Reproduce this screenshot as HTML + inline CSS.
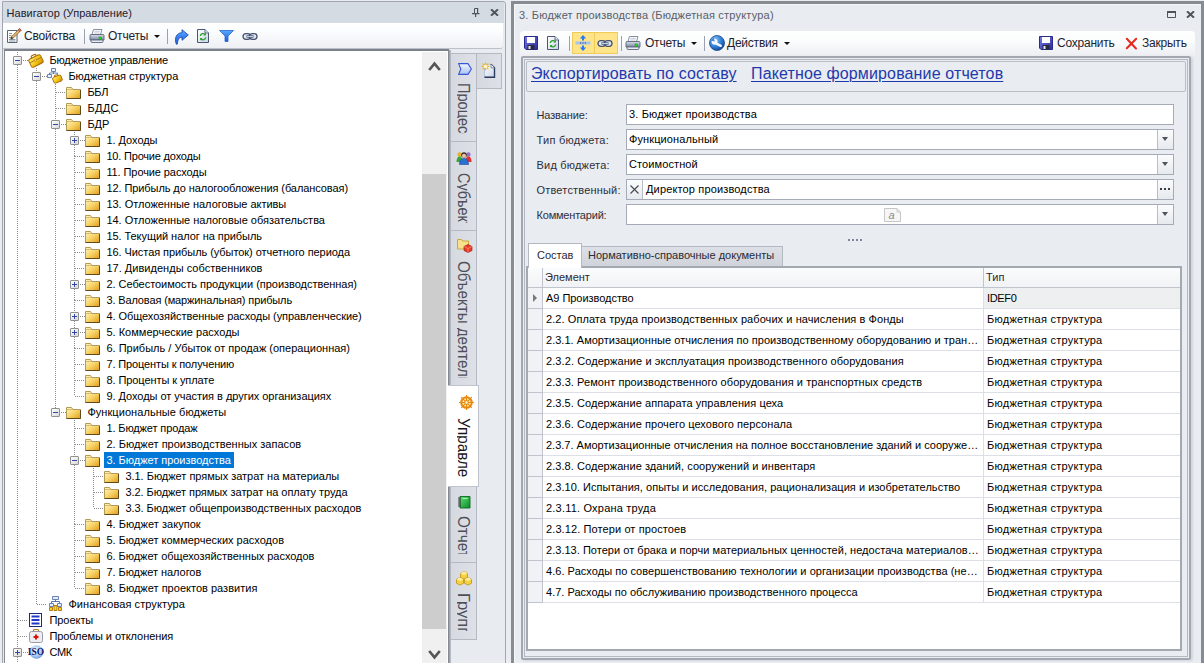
<!DOCTYPE html>
<html lang="ru"><head><meta charset="utf-8"><title>Навигатор</title>
<style>
*{box-sizing:border-box;margin:0;padding:0}
html,body{width:1204px;height:663px;overflow:hidden;background:#e9ecf0;font-family:"Liberation Sans",sans-serif;font-size:11px;color:#000}
.abs,.abs>*{position:absolute}
i,b,u,s{display:block;position:absolute;font-style:normal;text-decoration:none}
/* left panel */
#lp{left:2px;top:1px;width:504px;height:670px;border:1px solid #a2a7af;border-radius:0 3px 0 0;background:#e8ebef}
#lt{left:3px;top:2px;width:501px;height:21px;background:#d5dbe3}
#lt span{left:3.500px;top:5px;font-size:11px;line-height:13px;color:#1e2030;white-space:nowrap;letter-spacing:.05px}
#ltb{left:3px;top:23px;width:500px;height:26px;background:linear-gradient(#ffffff,#fbfcfd 35%,#eef0f4);border-bottom:1px solid #bcc1c9;border-radius:0 0 3px 0}
.tb{font-size:12px;line-height:14px;color:#1e1e2e;white-space:nowrap;letter-spacing:-.22px}
.sep{width:1px;background:#9aa0b0}
#tree{left:4px;top:49px;width:445px;height:620px;border:1px solid #858a92;border-top:2px solid #858a92;border-top-color:#7d828a;background:#fff}
#tr{left:0;top:0;width:1204px;height:663px}
.vl{width:1px;background-image:linear-gradient(#8c8c8c 50%,transparent 50%);background-size:1px 2px}
.hl{height:1px;background-image:linear-gradient(90deg,#8c8c8c 50%,transparent 50%);background-size:2px 1px}
.ex{width:9px;height:9px;border:1px solid #919191;background:linear-gradient(135deg,#fff,#d8d8d8);border-radius:1px}
.ex b{left:1px;top:3px;width:5px;height:1px;background:#3048a8}
.ex u{left:3px;top:1px;width:1px;height:5px;background:#3048a8}
.ic{position:absolute}
.tx{position:absolute;font-size:11px;line-height:16px;height:16px;white-space:nowrap;padding:0 2px 0 2.400px}
.tx.sel{background:#0078d7;color:#fff;padding-right:3px}
#sb{left:422px;top:52px;width:25px;height:611px;background:#f0f0f0}
#sbt{left:422px;top:174px;width:24px;height:455px;background:#cdcdcd}
/* vertical tabs */
#vtl{left:449px;top:50px;width:2px;height:613px;background:linear-gradient(90deg,#8f959d,#c3c8cf)}
.vt{border:1px solid #b5bac2;background:linear-gradient(90deg,#d6dae0,#dde1e7)}
.vt.act{background:#fff;border-color:#c0c5cd;border-left:0}
.vtx{left:472.400px;font-size:17px;color:#4e4e58;white-space:nowrap;transform-origin:0 0;transform:rotate(90deg);line-height:17px;height:15.400px;overflow:hidden}
.vtx span{display:block;position:absolute;left:0;top:0;transform-origin:0 0;transform:scaleX(.86)}
/* right panel */
#rp{left:511px;top:1px;width:693px;height:670px;border:3px solid #878b92;background:#e9ecf0;box-shadow:inset 1px 1px 0 #f6f7f9}
#rt{left:519px;top:9px;font-size:11px;line-height:13px;color:#5a5e6a;white-space:nowrap;letter-spacing:.2px}
#rtb{left:520px;top:31px;width:675px;height:25px;background:linear-gradient(#ffffff,#fbfcfd 40%,#eceef2);border-radius:4px 4px 0 0}
.hot{background:#ffe48a;border:1px solid #f2ca58}
#cont{left:521px;top:56px;width:670px;height:604px;border:2px solid #a3a8b0;border-radius:2px;box-shadow:2px 1px 2px #d2d6dc}
#cont2{left:524px;top:59px;width:664px;height:598px;border:1px solid #b4b9c1}
#links{left:526px;top:61px;width:660px;height:31px;border:1px solid #b9bec6;border-radius:2px;background:#e9ecf0}
.lnk{font-size:16px;line-height:20px;color:#1e3aac;text-decoration:underline;text-underline-offset:1.500px;text-decoration-thickness:1px;white-space:nowrap}
.lab{font-size:11px;line-height:13px;color:#2e2e3a;white-space:nowrap}
.inp{height:21px;border:1px solid #a4abb6;background:#fff;font-size:11px;line-height:19px;white-space:nowrap;letter-spacing:.1px}
.btn{width:16px;height:19px;border-left:1px solid #b9bec6;background:linear-gradient(#fbfcfd,#e6e9ee)}
.btn .dot{top:8px;width:2px;height:2px;background:#3a3e46}
.arr{width:0;height:0;border:4px solid transparent;border-top:4px solid #50545c;border-bottom:0;border-left-width:3.500px;border-right-width:3.500px}
.d4{top:239px;width:2px;height:2px;background:#7e8898}
.tab{font-size:11px;line-height:13px;white-space:nowrap;color:#2a2a34}
#tab1{left:528px;top:243px;width:54px;height:25px;background:#fff;border:1px solid #b4b9c1;border-bottom:0}
#tab2{left:581px;top:246px;width:202px;height:21px;background:linear-gradient(#dde0e6,#d0d4da);border:1px solid #b4b9c1}
#grid{left:526px;top:266px;width:656px;height:385px;border:2px solid #a3a9b1;background:#fff}
#gh{left:528px;top:268px;width:652px;height:20px;background:linear-gradient(#fbfcfd,#f0f2f5);border-bottom:1px solid #c0c4cc}
#gh i{top:0;width:1px;height:19px;background:#c0c4cc}
.gr{position:absolute;left:528px;width:652px;height:21px;border-bottom:1px solid #dcdfe5;font-size:11px;line-height:20px;white-space:nowrap}
.gr .ind{left:0;top:0;width:15px;height:21px;background:#f0f2f5;border-right:1px solid #c0c4cc;border-bottom:1px solid #c0c4cc}
.gr .ind s{left:5px;top:6px;width:0;height:0;border:4px solid transparent;border-left:4px solid #7a7a7a;border-right:0}
.gr .c1{letter-spacing:.08px;position:absolute;left:15px;top:0;width:441px;height:20px;padding-left:3px;overflow:hidden;border-right:1px solid #dcdfe5}
.gr .c2{letter-spacing:.25px;position:absolute;left:456px;top:0;width:196px;height:20px;padding-left:3px;overflow:hidden}
.gr.first .c2{background:#eeeff1}
</style></head><body>
<svg width="0" height="0" style="position:absolute">
<defs>
<linearGradient id="gf" x1="0" y1="0" x2="1" y2="1"><stop offset="0" stop-color="#fff6cc"/><stop offset=".5" stop-color="#f8d468"/><stop offset="1" stop-color="#e09c18"/></linearGradient>
<linearGradient id="gg" x1="0" y1="0" x2="1" y2="1"><stop offset="0" stop-color="#fff27a"/><stop offset=".55" stop-color="#f4c414"/><stop offset="1" stop-color="#c48408"/></linearGradient>
<linearGradient id="gblue" x1="0" y1="0" x2="0" y2="1"><stop offset="0" stop-color="#5aa8ff"/><stop offset="1" stop-color="#1c5ad8"/></linearGradient>
<linearGradient id="gtag" x1="0" y1="0" x2="0" y2="1"><stop offset="0" stop-color="#f4f8ff"/><stop offset="1" stop-color="#a8c0f4"/></linearGradient>
<linearGradient id="gpage" x1="0" y1="0" x2="1" y2="1"><stop offset="0" stop-color="#ffffff"/><stop offset="1" stop-color="#c8d4e8"/></linearGradient>
<linearGradient id="ggreen" x1="0" y1="0" x2="1" y2="1"><stop offset="0" stop-color="#58e070"/><stop offset="1" stop-color="#0a8a28"/></linearGradient>
<radialGradient id="gglobe" cx=".35" cy=".3" r=".8"><stop offset="0" stop-color="#8ac8ff"/><stop offset=".6" stop-color="#2a78d0"/><stop offset="1" stop-color="#123a80"/></radialGradient>
<radialGradient id="giso" cx=".45" cy=".4" r=".6"><stop offset="0" stop-color="#ffffff"/><stop offset=".6" stop-color="#b4d0f4"/><stop offset="1" stop-color="#6c9ce0"/></radialGradient>
<linearGradient id="gprn" x1="0" y1="0" x2="0" y2="1"><stop offset="0" stop-color="#d8deea"/><stop offset="1" stop-color="#7c88a4"/></linearGradient>
<linearGradient id="gsave" x1="0" y1="0" x2="1" y2="1"><stop offset="0" stop-color="#7a7af0"/><stop offset="1" stop-color="#2a2a98"/></linearGradient>
<symbol id="i-f" viewBox="0 0 16 16"><path d="M0.500 14.500v-11h5l1.500 2h7.500v9z" fill="url(#gf)" stroke="#b49a58" stroke-width="1"/><path d="M1 5.500h6" stroke="#d8bc6c" stroke-width="1"/><path d="M0.500 14.500h14v-8.500" fill="none" stroke="#5e4a1c" stroke-width="1"/></symbol>
<symbol id="i-brief" viewBox="0 0 16 16"><g transform="rotate(-26 8 9)"><rect x="5.500" y="2.500" width="5" height="3" rx="1" fill="none" stroke="#a86c04" stroke-width="1.200"/><rect x="1.500" y="4.500" width="13" height="9" rx="2" fill="url(#gg)" stroke="#a86c04"/><path d="M2 8h12" stroke="#a86c04" stroke-width=".8"/><rect x="7" y="7" width="2" height="2" fill="#ffe9a0" stroke="#a86c04" stroke-width=".5"/></g></symbol>
<symbol id="i-bstruct" viewBox="0 0 16 16"><path d="M4.500 0.500h4v3h-4zM0.500 6.500h4v3h-4zM6.500 4v2M2.500 6v-1h8v1" fill="#eef4ff" stroke="#5a76a8" stroke-width=".9"/><g transform="translate(5,5) scale(.68) rotate(-20 8 9)"><rect x="5.500" y="2.500" width="5" height="3" rx="1" fill="none" stroke="#a86c04" stroke-width="1.400"/><rect x="1.500" y="4.500" width="13" height="9" rx="2" fill="url(#gg)" stroke="#a86c04" stroke-width="1.300"/></g></symbol>
<symbol id="i-fin" viewBox="0 0 16 16"><path d="M8.500 3.500v2.500M4.500 7v-1.500h8v1.500" fill="none" stroke="#5a76a8" stroke-width="1"/><path d="M5.500 0.500h6v3h-6zM2.500 7.500h4v3h-4zM10.500 7.500h4v3h-4z" fill="#e4eefc" stroke="#5a76a8" stroke-width=".9"/><path d="M2.500 11.500h3v3h-3zM7 9.500h3v5h-3zM11.500 11.500h3v3h-3z" fill="#f8d030" stroke="#a87408" stroke-width=".9"/></symbol>
<symbol id="i-proj" viewBox="0 0 16 16"><rect x="1.500" y="1.500" width="12" height="13" fill="#fff" stroke="#1a2a7a"/><path d="M3.500 4.500h8M3.500 8h8M3.500 11.500h8" stroke="#2038c8" stroke-width="2"/></symbol>
<symbol id="i-prob" viewBox="0 0 16 16"><rect x="5.500" y="1.500" width="5" height="3" rx="1" fill="none" stroke="#b08020" stroke-width="1.200"/><rect x="1.500" y="3.500" width="13" height="11" rx="2" fill="#eceef2" stroke="#9a9aa4"/><path d="M8 6.500v5M5.500 9h5" stroke="#e01010" stroke-width="2"/></symbol>
<symbol id="i-iso" viewBox="0 0 16 16"><circle cx="8.500" cy="8" r="6.800" fill="url(#giso)"/><text x="8" y="11.300" font-size="9.500" font-weight="bold" font-family="Liberation Serif,serif" text-anchor="middle" fill="#14146a">ISO</text></symbol>
<symbol id="i-print" viewBox="0 0 16 16"><path d="M4.500 1.500h8.500l-1.500 5h-8.500z" fill="#fff" stroke="#7a8296" stroke-width=".9"/><path d="M5.500 3.300h5.500M5 5h5.500" stroke="#b4bac8" stroke-width=".8"/><path d="M1 7.500q0-1 1-1h12q1 0 1 1v4.500h-14z" fill="url(#gprn)" stroke="#5c667e" stroke-width=".9"/><path d="M2 12h12v1.500q0 1-1 1h-10q-1 0-1-1z" fill="#e8ecf4" stroke="#5c667e" stroke-width=".9"/><rect x="10" y="9" width="2.500" height="2.500" fill="#28e028" stroke="#0a8a0a" stroke-width=".5"/></symbol>
<symbol id="i-refresh" viewBox="0 0 12 14"><path d="M0.500 0.500h7.500l3.500 3.500v9.500h-11z" fill="url(#gpage)" stroke="#4a5674" stroke-width="1"/><path d="M8 0.500v3.500h3.500" fill="#dfe6f2" stroke="#4a5674" stroke-width=".8"/><path d="M8.200 5.600A2.800 2.800 0 0 0 3.300 7M3.800 9.800A2.800 2.800 0 0 0 8.700 8.300" fill="none" stroke="#28a028" stroke-width="1.300"/><path d="M8.900 3.800v2.600H6.300zM3.100 11.600V9h2.600z" fill="#28a028"/></symbol>
<symbol id="i-chain" viewBox="0 0 16 9"><rect x="1" y="1.700" width="7.500" height="5.600" rx="2.800" fill="#dfe6f4" stroke="#46526e" stroke-width="1.300"/><rect x="7.500" y="1.700" width="7.500" height="5.600" rx="2.800" fill="#dfe6f4" stroke="#46526e" stroke-width="1.300"/><path d="M4.500 4.500h7" stroke="#46526e" stroke-width="2.400"/><path d="M5 4.500h6" stroke="#c4d0e8" stroke-width="1"/></symbol>
<symbol id="i-save" viewBox="0 0 14 14"><path d="M0.500 0.500h13v13h-11.500l-1.500-1.500z" fill="url(#gsave)" stroke="#2a2a8a" stroke-width="1"/><rect x="3" y="1" width="8" height="6" fill="#fff"/><rect x="3.500" y="9" width="7" height="4.500" fill="#2a2a3a"/><rect x="4.500" y="10" width="2" height="3" fill="#e8e8f0"/></symbol>
</defs></svg>

<div class="abs">
<!-- LEFT PANEL -->
<div id="lp"></div>
<div id="lt" class="abs"><span>Навигатор (Управление)</span></div>
<svg style="left:472px;top:8px" width="8" height="9" viewBox="0 0 8 9"><path d="M2.500 5V0.500h3V5" fill="none" stroke="#50545a"/><path d="M5 0v5h1.200V0zM0 5h7.500v1.200H0zM3 6h1.200v3H3z" fill="#50545a"/></svg>
<svg style="left:490px;top:9px" width="9" height="7" viewBox="0 0 9 7"><path d="M1 0.300L8 6.700M8 0.300L1 6.700" stroke="#50545a" stroke-width="2"/></svg>
<div id="ltb"></div>
<!-- props icon -->
<svg style="left:6px;top:28px" width="16" height="16" viewBox="0 0 16 16"><path d="M1.500 2.500h9.500v12h-9.500z" fill="#fff" stroke="#5a6478"/><path d="M3 5.500h3M3 7.500h2.500M3 9.500h2M3 11.500h6.500M3 13h6.500" stroke="#8a93a4" stroke-width="1"/><path d="M13.600 0.600l1.600 1.600-8 8-2.400 0.800 0.800-2.400z" fill="#e8b868" stroke="#6a5030" stroke-width=".7"/><path d="M13.600 0.600l1.600 1.600-1.400 1.400-1.600-1.600z" fill="#e87868" stroke="#8a3a30" stroke-width=".6"/><path d="M4.800 11l0.800-2.400 1.600 1.600z" fill="#2a2a2a"/></svg>
<span class="tb" style="left:24px;top:29px">Свойства</span>
<i class="sep" style="left:84px;top:29px;height:15px"></i>
<svg style="left:89px;top:28px" width="16" height="16"><use href="#i-print"/></svg>
<span class="tb" style="left:108px;top:29px">Отчеты</span>
<i class="arr" style="left:154px;top:35px;border-width:3.500px 3px 0 3px;border-top-color:#111"></i>
<i class="sep" style="left:167px;top:29px;height:15px"></i>
<svg style="left:174px;top:29px" width="15" height="16" viewBox="0 0 15 16"><path d="M8 0.700l6.300 5.300-6.300 5.300v-3.100c-2.800 0-4.300 2-4.600 6.800l-1 0.300c-2.600-6.500 0.600-11.600 5.600-11.600z" fill="url(#gblue)" stroke="#1c4fb4" stroke-width=".9" stroke-linejoin="round"/></svg>
<svg style="left:197px;top:29px" width="12" height="14"><use href="#i-refresh"/></svg>
<svg style="left:219px;top:30px" width="15" height="12" viewBox="0 0 15 12"><path d="M0.500 0.500h14l-5.500 5.500v5.500h-3v-5.500z" fill="url(#gblue)" stroke="#2468d0" stroke-width=".8" stroke-linejoin="round"/></svg>
<svg style="left:242px;top:32px" width="16" height="9"><use href="#i-chain"/></svg>

<div id="tree"></div>
<div id="sb"></div><div id="sbt"></div>
<svg style="left:428px;top:61px" width="13" height="10" viewBox="0 0 13 10"><path d="M1.200 9L6.500 2.600 11.800 9" fill="none" stroke="#555" stroke-width="2.600"/></svg>
<svg style="left:428px;top:650px" width="13" height="10" viewBox="0 0 13 10"><path d="M1.200 1L6.500 7.400 11.800 1" fill="none" stroke="#555" stroke-width="2.600"/></svg>
<div id="tr" class="abs">
<i class="hl" style="left:23px;top:60px;width:5px"></i>
<i class="ex" style="left:13px;top:56px"><b></b></i>
<svg class="ic" style="left:28px;top:52px" width="16" height="16"><use href="#i-brief"/></svg>
<span class="tx" style="left:47px;top:52px;letter-spacing:-0.136px">Бюджетное управление</span>
<i class="hl" style="left:42px;top:76px;width:5px"></i>
<i class="ex" style="left:32px;top:72px"><b></b></i>
<svg class="ic" style="left:47px;top:68px" width="16" height="16"><use href="#i-bstruct"/></svg>
<span class="tx" style="left:66px;top:68px;letter-spacing:-0.047px">Бюджетная структура</span>
<i class="hl" style="left:56px;top:92px;width:10px"></i>
<svg class="ic" style="left:66px;top:84px" width="16" height="16"><use href="#i-f"/></svg>
<span class="tx" style="left:85px;top:84px;letter-spacing:-0.269px">ББЛ</span>
<i class="hl" style="left:56px;top:108px;width:10px"></i>
<svg class="ic" style="left:66px;top:100px" width="16" height="16"><use href="#i-f"/></svg>
<span class="tx" style="left:85px;top:100px;letter-spacing:0.322px">БДДС</span>
<i class="hl" style="left:61px;top:124px;width:5px"></i>
<i class="ex" style="left:51px;top:120px"><b></b></i>
<svg class="ic" style="left:66px;top:116px" width="16" height="16"><use href="#i-f"/></svg>
<span class="tx" style="left:85px;top:116px;letter-spacing:-0.055px">БДР</span>
<i class="hl" style="left:80px;top:140px;width:5px"></i>
<i class="ex" style="left:70px;top:136px"><b></b><u></u></i>
<svg class="ic" style="left:85px;top:132px" width="16" height="16"><use href="#i-f"/></svg>
<span class="tx" style="left:104px;top:132px;letter-spacing:-0.031px">1. Доходы</span>
<i class="hl" style="left:75px;top:156px;width:10px"></i>
<svg class="ic" style="left:85px;top:148px" width="16" height="16"><use href="#i-f"/></svg>
<span class="tx" style="left:104px;top:148px;letter-spacing:-0.188px">10. Прочие доходы</span>
<i class="hl" style="left:75px;top:172px;width:10px"></i>
<svg class="ic" style="left:85px;top:164px" width="16" height="16"><use href="#i-f"/></svg>
<span class="tx" style="left:104px;top:164px;letter-spacing:-0.094px">11. Прочие расходы</span>
<i class="hl" style="left:75px;top:188px;width:10px"></i>
<svg class="ic" style="left:85px;top:180px" width="16" height="16"><use href="#i-f"/></svg>
<span class="tx" style="left:104px;top:180px;letter-spacing:-0.081px">12. Прибыль до налогообложения (балансовая)</span>
<i class="hl" style="left:75px;top:204px;width:10px"></i>
<svg class="ic" style="left:85px;top:196px" width="16" height="16"><use href="#i-f"/></svg>
<span class="tx" style="left:104px;top:196px;letter-spacing:-0.024px">13. Отложенные налоговые активы</span>
<i class="hl" style="left:75px;top:220px;width:10px"></i>
<svg class="ic" style="left:85px;top:212px" width="16" height="16"><use href="#i-f"/></svg>
<span class="tx" style="left:104px;top:212px;letter-spacing:-0.007px">14. Отложенные налоговые обязательства</span>
<i class="hl" style="left:75px;top:236px;width:10px"></i>
<svg class="ic" style="left:85px;top:228px" width="16" height="16"><use href="#i-f"/></svg>
<span class="tx" style="left:104px;top:228px;letter-spacing:-0.056px">15. Текущий налог на прибыль</span>
<i class="hl" style="left:75px;top:252px;width:10px"></i>
<svg class="ic" style="left:85px;top:244px" width="16" height="16"><use href="#i-f"/></svg>
<span class="tx" style="left:104px;top:244px;letter-spacing:-0.062px">16. Чистая прибыль (убыток) отчетного периода</span>
<i class="hl" style="left:75px;top:268px;width:10px"></i>
<svg class="ic" style="left:85px;top:260px" width="16" height="16"><use href="#i-f"/></svg>
<span class="tx" style="left:104px;top:260px;letter-spacing:0.025px">17. Дивиденды собственников</span>
<i class="hl" style="left:80px;top:284px;width:5px"></i>
<i class="ex" style="left:70px;top:280px"><b></b><u></u></i>
<svg class="ic" style="left:85px;top:276px" width="16" height="16"><use href="#i-f"/></svg>
<span class="tx" style="left:104px;top:276px;letter-spacing:-0.027px">2. Себестоимость продукции (производственная)</span>
<i class="hl" style="left:75px;top:300px;width:10px"></i>
<svg class="ic" style="left:85px;top:292px" width="16" height="16"><use href="#i-f"/></svg>
<span class="tx" style="left:104px;top:292px;letter-spacing:-0.132px">3. Валовая (маржинальная) прибыль</span>
<i class="hl" style="left:80px;top:316px;width:5px"></i>
<i class="ex" style="left:70px;top:312px"><b></b><u></u></i>
<svg class="ic" style="left:85px;top:308px" width="16" height="16"><use href="#i-f"/></svg>
<span class="tx" style="left:104px;top:308px;letter-spacing:-0.06px">4. Общехозяйственные расходы (управленческие)</span>
<i class="hl" style="left:80px;top:332px;width:5px"></i>
<i class="ex" style="left:70px;top:328px"><b></b><u></u></i>
<svg class="ic" style="left:85px;top:324px" width="16" height="16"><use href="#i-f"/></svg>
<span class="tx" style="left:104px;top:324px;letter-spacing:0.019px">5. Коммерческие расходы</span>
<i class="hl" style="left:75px;top:348px;width:10px"></i>
<svg class="ic" style="left:85px;top:340px" width="16" height="16"><use href="#i-f"/></svg>
<span class="tx" style="left:104px;top:340px;letter-spacing:0.009px">6. Прибыль / Убыток от продаж (операционная)</span>
<i class="hl" style="left:75px;top:364px;width:10px"></i>
<svg class="ic" style="left:85px;top:356px" width="16" height="16"><use href="#i-f"/></svg>
<span class="tx" style="left:104px;top:356px;letter-spacing:-0.123px">7. Проценты к получению</span>
<i class="hl" style="left:75px;top:380px;width:10px"></i>
<svg class="ic" style="left:85px;top:372px" width="16" height="16"><use href="#i-f"/></svg>
<span class="tx" style="left:104px;top:372px;letter-spacing:-0.078px">8. Проценты к уплате</span>
<i class="hl" style="left:75px;top:396px;width:10px"></i>
<svg class="ic" style="left:85px;top:388px" width="16" height="16"><use href="#i-f"/></svg>
<span class="tx" style="left:104px;top:388px;letter-spacing:-0.037px">9. Доходы от участия в других организациях</span>
<i class="hl" style="left:61px;top:412px;width:5px"></i>
<i class="ex" style="left:51px;top:408px"><b></b></i>
<svg class="ic" style="left:66px;top:404px" width="16" height="16"><use href="#i-f"/></svg>
<span class="tx" style="left:85px;top:404px;letter-spacing:0.057px">Функциональные бюджеты</span>
<i class="hl" style="left:75px;top:428px;width:10px"></i>
<svg class="ic" style="left:85px;top:420px" width="16" height="16"><use href="#i-f"/></svg>
<span class="tx" style="left:104px;top:420px;letter-spacing:-0.115px">1. Бюджет продаж</span>
<i class="hl" style="left:75px;top:444px;width:10px"></i>
<svg class="ic" style="left:85px;top:436px" width="16" height="16"><use href="#i-f"/></svg>
<span class="tx" style="left:104px;top:436px;letter-spacing:0.016px">2. Бюджет производственных запасов</span>
<i class="hl" style="left:80px;top:460px;width:5px"></i>
<i class="ex" style="left:70px;top:456px"><b></b></i>
<svg class="ic" style="left:85px;top:452px" width="16" height="16"><use href="#i-f"/></svg>
<span class="tx sel" style="left:104px;top:452px;letter-spacing:-0.023px">3. Бюджет производства</span>
<i class="hl" style="left:94px;top:476px;width:10px"></i>
<svg class="ic" style="left:104px;top:468px" width="16" height="16"><use href="#i-f"/></svg>
<span class="tx" style="left:123px;top:468px;letter-spacing:-0.021px">3.1. Бюджет прямых затрат на материалы</span>
<i class="hl" style="left:94px;top:492px;width:10px"></i>
<svg class="ic" style="left:104px;top:484px" width="16" height="16"><use href="#i-f"/></svg>
<span class="tx" style="left:123px;top:484px;letter-spacing:-0.053px">3.2. Бюджет прямых затрат на оплату труда</span>
<i class="hl" style="left:94px;top:508px;width:10px"></i>
<svg class="ic" style="left:104px;top:500px" width="16" height="16"><use href="#i-f"/></svg>
<span class="tx" style="left:123px;top:500px;letter-spacing:-0.039px">3.3. Бюджет общепроизводственных расходов</span>
<i class="hl" style="left:75px;top:524px;width:10px"></i>
<svg class="ic" style="left:85px;top:516px" width="16" height="16"><use href="#i-f"/></svg>
<span class="tx" style="left:104px;top:516px;letter-spacing:0.045px">4. Бюджет закупок</span>
<i class="hl" style="left:75px;top:540px;width:10px"></i>
<svg class="ic" style="left:85px;top:532px" width="16" height="16"><use href="#i-f"/></svg>
<span class="tx" style="left:104px;top:532px;letter-spacing:0.004px">5. Бюджет коммерческих расходов</span>
<i class="hl" style="left:75px;top:556px;width:10px"></i>
<svg class="ic" style="left:85px;top:548px" width="16" height="16"><use href="#i-f"/></svg>
<span class="tx" style="left:104px;top:548px;letter-spacing:-0.033px">6. Бюджет общехозяйственных расходов</span>
<i class="hl" style="left:75px;top:572px;width:10px"></i>
<svg class="ic" style="left:85px;top:564px" width="16" height="16"><use href="#i-f"/></svg>
<span class="tx" style="left:104px;top:564px;letter-spacing:-0.048px">7. Бюджет налогов</span>
<i class="hl" style="left:75px;top:588px;width:10px"></i>
<svg class="ic" style="left:85px;top:580px" width="16" height="16"><use href="#i-f"/></svg>
<span class="tx" style="left:104px;top:580px;letter-spacing:0.017px">8. Бюджет проектов развития</span>
<i class="hl" style="left:37px;top:604px;width:10px"></i>
<svg class="ic" style="left:47px;top:596px" width="16" height="16"><use href="#i-fin"/></svg>
<span class="tx" style="left:66px;top:596px;letter-spacing:0.075px">Финансовая структура</span>
<i class="hl" style="left:18px;top:620px;width:10px"></i>
<svg class="ic" style="left:28px;top:612px" width="16" height="16"><use href="#i-proj"/></svg>
<span class="tx" style="left:47px;top:612px;letter-spacing:-0.042px">Проекты</span>
<i class="hl" style="left:18px;top:636px;width:10px"></i>
<svg class="ic" style="left:28px;top:628px" width="16" height="16"><use href="#i-prob"/></svg>
<span class="tx" style="left:47px;top:628px;letter-spacing:-0.059px">Проблемы и отклонения</span>
<i class="hl" style="left:23px;top:652px;width:5px"></i>
<i class="ex" style="left:13px;top:648px"><b></b><u></u></i>
<svg class="ic" style="left:28px;top:644px" width="16" height="16"><use href="#i-iso"/></svg>
<span class="tx" style="left:47px;top:644px;letter-spacing:-0.269px">СМК</span>
<i class="vl" style="left:17px;top:65px;height:555px"></i>
<i class="vl" style="left:36px;top:81px;height:523px"></i>
<i class="vl" style="left:36px;top:68px;height:4px"></i>
<i class="vl" style="left:55px;top:92px;height:16px"></i>
<i class="vl" style="left:55px;top:84px;height:8px"></i>
<i class="vl" style="left:55px;top:108px;height:12px"></i>
<i class="vl" style="left:55px;top:129px;height:279px"></i>
<i class="vl" style="left:74px;top:145px;height:11px"></i>
<i class="vl" style="left:74px;top:132px;height:4px"></i>
<i class="vl" style="left:74px;top:156px;height:16px"></i>
<i class="vl" style="left:74px;top:172px;height:16px"></i>
<i class="vl" style="left:74px;top:188px;height:16px"></i>
<i class="vl" style="left:74px;top:204px;height:16px"></i>
<i class="vl" style="left:74px;top:220px;height:16px"></i>
<i class="vl" style="left:74px;top:236px;height:16px"></i>
<i class="vl" style="left:74px;top:252px;height:16px"></i>
<i class="vl" style="left:74px;top:268px;height:12px"></i>
<i class="vl" style="left:74px;top:289px;height:11px"></i>
<i class="vl" style="left:74px;top:300px;height:12px"></i>
<i class="vl" style="left:74px;top:321px;height:7px"></i>
<i class="vl" style="left:74px;top:337px;height:11px"></i>
<i class="vl" style="left:74px;top:348px;height:16px"></i>
<i class="vl" style="left:74px;top:364px;height:16px"></i>
<i class="vl" style="left:74px;top:380px;height:16px"></i>
<i class="vl" style="left:74px;top:428px;height:16px"></i>
<i class="vl" style="left:74px;top:420px;height:8px"></i>
<i class="vl" style="left:74px;top:444px;height:12px"></i>
<i class="vl" style="left:74px;top:465px;height:59px"></i>
<i class="vl" style="left:93px;top:476px;height:16px"></i>
<i class="vl" style="left:93px;top:468px;height:8px"></i>
<i class="vl" style="left:93px;top:492px;height:16px"></i>
<i class="vl" style="left:74px;top:524px;height:16px"></i>
<i class="vl" style="left:74px;top:540px;height:16px"></i>
<i class="vl" style="left:74px;top:556px;height:16px"></i>
<i class="vl" style="left:74px;top:572px;height:16px"></i>
<i class="vl" style="left:17px;top:620px;height:16px"></i>
<i class="vl" style="left:17px;top:636px;height:12px"></i>
<i class="vl" style="left:17px;top:50px;height:6px"></i>
<i class="vl" style="left:17px;top:657px;height:6px"></i>
</div>

<!-- vertical tabs -->
<i id="vtl"></i>
<div class="vt" style="left:450px;top:53px;width:27px;height:89px"></div>
<div class="vt" style="left:476px;top:53px;width:26px;height:36px"></div>
<div class="vt" style="left:450px;top:141px;width:27px;height:90px"></div>
<div class="vt" style="left:450px;top:230px;width:27px;height:156px"></div>
<div class="vt" style="left:450px;top:486px;width:27px;height:77px"></div>
<div class="vt" style="left:450px;top:562px;width:27px;height:78px"></div>
<div class="vt act" style="left:448px;top:385px;width:31px;height:102px"></div>
<div class="vtx" style="top:82.900px;width:51.200px"><span style="transform:scaleX(.859)">Процессы</span></div>
<div class="vtx" style="top:172.800px;width:50.200px"><span style="transform:scaleX(.846)">Субъекты</span></div>
<div class="vtx" style="top:260.700px;width:117.300px"><span style="transform:scaleX(.892)">Объекты деятельности</span></div>
<div class="vtx" style="top:417.500px;width:60.300px;color:#16161c"><span style="transform:scaleX(.896)">Управление</span></div>
<div class="vtx" style="top:516.300px;width:38px"><span style="transform:scaleX(.898)">Отчеты</span></div>
<div class="vtx" style="top:593.100px;width:38.100px"><span style="transform:scaleX(.970)">Группы</span></div>
<!-- tab icons -->
<svg style="left:458px;top:62.600px" width="14" height="12" viewBox="0 0 14 12"><path d="M0.600 0.600h9.400l3.400 5.400-3.400 5.400H0.600l2.200-5.400z" fill="url(#gtag)" stroke="#3558d4" stroke-width="1.100" stroke-linejoin="round"/></svg>
<svg style="left:481px;top:62px" width="15" height="17" viewBox="0 0 15 17"><path d="M3.500 2.300h6.500l3.500 3.500v9.400h-10z" fill="url(#gpage)" stroke="#a8b8d8" stroke-width=".8"/><path d="M10 2.300l3.500 3.500v9.400h-10" fill="none" stroke="#2c3c5e" stroke-width="1.400"/><path d="M10 2.300v3.500h3.500" fill="#eef2fa" stroke="#5a6888" stroke-width=".7"/><g stroke="#f0b818" stroke-width="1.300" stroke-linecap="round"><path d="M4.500 0.900v7M1 4.400h7M2 1.900l5 5M7 1.900l-5 5"/></g><circle cx="4.500" cy="4.400" r="1.700" fill="#fffbe0"/></svg>
<svg style="left:456px;top:150px" width="16" height="15" viewBox="0 0 16 15"><circle cx="3.600" cy="4.500" r="2.200" fill="#e8b030"/><path d="M0.500 12c0-4 1.500-5.500 3.200-5.500s2.500 1.500 2.800 5.500z" fill="#38a838"/><circle cx="12.400" cy="4.500" r="2.200" fill="#9a6ad0"/><path d="M15.500 12c0-4-1.500-5.500-3.200-5.500s-2.500 1.500-2.800 5.500z" fill="#e03030"/><circle cx="8" cy="5" r="2.800" fill="#3a3028"/><circle cx="8" cy="5.800" r="2" fill="#f0c8a0"/><path d="M3.500 14.500c0-4.500 2-6 4.500-6s4.500 1.500 4.500 6z" fill="#2a70d0" stroke="#1a4a9a" stroke-width=".6"/></svg>
<svg style="left:457px;top:238px" width="16" height="15" viewBox="0 0 16 15"><path d="M0.500 1.500h4l1 1.500h6v8h-11z" fill="#f8e08a" stroke="#c8a030" stroke-width=".9"/><path d="M7 8.500l4-2 4 2v4l-4 2-4-2z" fill="#e83a28" stroke="#a01c10" stroke-width=".7"/><path d="M7 8.500l4 2 4-2M11 10.500v4" stroke="#ff9a80" stroke-width=".7" fill="none"/></svg>
<svg style="left:459px;top:395px" width="15" height="15" viewBox="0 0 15 15"><circle cx="7.500" cy="7.500" r="5.300" fill="#ffe9a8" stroke="#e88a10" stroke-width="2"/><path d="M7.500 0v15M0 7.500h15M2.200 2.200l10.600 10.600M12.800 2.200L2.200 12.800" stroke="#e88a10" stroke-width="1.100"/><circle cx="7.500" cy="7.500" r="1.800" fill="#fff3c8" stroke="#d87a08" stroke-width=".8"/></svg>
<svg style="left:457px;top:495px" width="14" height="14" viewBox="0 0 14 14"><path d="M3 1.500h10v11.500h-10z" fill="url(#ggreen)" stroke="#0a6a20" stroke-width=".9"/><path d="M1 3h3M1 5h3M1 7h3M1 9h3M1 11h3" stroke="#3a3a3a" stroke-width="1"/><path d="M5.500 3.500h5" stroke="#a8f0b0" stroke-width="1.200"/></svg>
<svg style="left:456px;top:571px" width="16" height="15" viewBox="0 0 16 15"><path d="M8 0.500l3.500 1.800v4l-3.500 1.800-3.500-1.800v-4z" fill="#f8d040" stroke="#b88a08" stroke-width=".7"/><path d="M4 6.500l3.500 1.800v4l-3.500 1.800-3.500-1.800v-4z" fill="#f8d040" stroke="#b88a08" stroke-width=".7"/><path d="M12 6.500l3.500 1.800v4l-3.500 1.800-3.500-1.800v-4z" fill="#f8d040" stroke="#b88a08" stroke-width=".7"/><path d="M8 0.500l3.500 1.800-3.500 1.800-3.500-1.800zM4 6.500l3.500 1.800-3.500 1.800-3.500-1.800zM12 6.500l3.500 1.800-3.500 1.800-3.500-1.800z" fill="#fff0a0"/></svg>

<!-- RIGHT PANEL -->
<div id="rp"></div>
<span id="rt">3. Бюджет производства (Бюджетная структура)</span>
<svg style="left:1167px;top:11px" width="9" height="7" viewBox="0 0 9 7"><path d="M0.500 1h8v5.500h-8z" fill="none" stroke="#50545a" stroke-width="1"/><path d="M0 0h9v2H0z" fill="#50545a"/></svg>
<svg style="left:1186px;top:11px" width="9" height="7" viewBox="0 0 9 7"><path d="M1 0.300L8 6.700M8 0.300L1 6.700" stroke="#50545a" stroke-width="2"/></svg>
<div id="rtb"></div>
<svg style="left:524px;top:36px" width="14" height="14"><use href="#i-save"/></svg>
<svg style="left:547px;top:36px" width="12" height="14"><use href="#i-refresh"/></svg>
<i class="sep" style="left:569px;top:36px;height:15px"></i>
<i class="hot" style="left:572px;top:32px;width:23px;height:22px"></i>
<i class="hot" style="left:594px;top:32px;width:24px;height:22px"></i>
<svg style="left:575px;top:35px" width="16" height="16" viewBox="0 0 16 16"><path d="M0.500 6.500h15v3h-15z" fill="#a8c4ee"/><path d="M5 8h1.200M7.400 8h1.200M9.800 8h1.200" stroke="#1a3a8a" stroke-width="1"/><path d="M8 0l3.200 3.400H9v2.100H7V3.400H4.800zM8 16l3.200-3.400H9v-2.100H7v2.100H4.800z" fill="#2a7af0"/></svg>
<svg style="left:597px;top:39px" width="16" height="9"><use href="#i-chain"/></svg>
<i class="sep" style="left:621px;top:36px;height:15px"></i>
<svg style="left:625px;top:35px" width="16" height="16"><use href="#i-print"/></svg>
<span class="tb" style="left:645px;top:36px">Отчеты</span>
<i class="arr" style="left:691px;top:42px;border-width:3.500px 3px 0 3px;border-top-color:#111"></i>
<i class="sep" style="left:704px;top:36px;height:15px"></i>
<svg style="left:709px;top:35px" width="16" height="16" viewBox="0 0 16 16"><circle cx="8" cy="8" r="7.500" fill="url(#gglobe)" stroke="#1a4a8a" stroke-width=".8"/><path d="M6.500 8.200l5.300 2.600" stroke="#f4f8ff" stroke-width="2.400" stroke-linecap="round"/><circle cx="5.600" cy="6.700" r="2.900" fill="#f4f8ff"/><path d="M5.800 6.600L2 5.600 4.600 2.400z" fill="#3a86dc"/></svg>
<span class="tb" style="left:727px;top:36px">Действия</span>
<i class="arr" style="left:784px;top:42px;border-width:3.500px 3px 0 3px;border-top-color:#111"></i>
<svg style="left:1039px;top:36px" width="14" height="14"><use href="#i-save"/></svg>
<span class="tb" style="left:1057px;top:36px">Сохранить</span>
<svg style="left:1125px;top:37px" width="13" height="13" viewBox="0 0 13 13"><path d="M1.800 1.800L11 11.500M11.200 1.800L1.800 11.200" stroke="#e8281c" stroke-width="2" stroke-linecap="round"/></svg>
<span class="tb" style="left:1142px;top:36px">Закрыть</span>
<div id="cont"></div><div id="cont2"></div>
<div id="links"></div>
<span class="lnk" style="left:531px;top:64px;letter-spacing:.1px">Экспортировать по составу</span>
<span class="lnk" style="left:751px;top:64px;letter-spacing:.13px">Пакетное формирование отчетов</span>

<span class="lab" style="left:536.500px;top:109px;letter-spacing:-0.12px">Название:</span>
<span class="lab" style="left:536.500px;top:134px;letter-spacing:0.27px">Тип бюджета:</span>
<span class="lab" style="left:536.500px;top:159px;letter-spacing:0.2px">Вид бюджета:</span>
<span class="lab" style="left:536.500px;top:184px;letter-spacing:0.18px">Ответственный:</span>
<span class="lab" style="left:536.500px;top:209px;letter-spacing:-0.2px">Комментарий:</span>
<div class="inp" style="left:626px;top:104px;width:548px;padding-left:2px;letter-spacing:.14px">3. Бюджет производства</div>
<div class="inp" style="left:626px;top:129px;width:548px;padding-left:2px">Функциональный<i class="btn" style="right:0;top:0"><i class="arr" style="left:4px;top:7px"></i></i></div>
<div class="inp" style="left:626px;top:154px;width:548px;padding-left:2px">Стоимостной<i class="btn" style="right:0;top:0"><i class="arr" style="left:4px;top:7px"></i></i></div>
<div class="inp" style="left:626px;top:179px;width:548px;padding-left:19px;letter-spacing:.15px">Директор производства<i class="btn" style="right:0;top:0"><b class="dot" style="left:2px"></b><b class="dot" style="left:6px"></b><b class="dot" style="left:10px"></b></i><i class="btn" style="left:0;top:0;width:16px;border-left:0;border-right:1px solid #b9bec6"><svg style="position:absolute;left:3px;top:5px" width="9" height="9" viewBox="0 0 9 9"><path d="M0.500 0.500l8 8M8.500 0.500l-8 8" stroke="#4a4e56" stroke-width="1.200"/></svg></i></div>
<div class="inp" style="left:626px;top:204px;width:548px"><i class="btn" style="right:0;top:0"><i class="arr" style="left:4px;top:7px"></i></i>
<svg style="position:absolute;left:257px;top:3px" width="17" height="14" viewBox="0 0 17 14"><path d="M0.500 0.500h12.500l3.500 3.500v9.500h-16z" fill="#f6f6f6" stroke="#c6c6c6"/><path d="M13 0.500v3.500h3.500" fill="#e4e4e4" stroke="#c6c6c6" stroke-width=".8"/><text x="7.500" y="11" font-size="11" font-style="italic" font-family="Liberation Sans,sans-serif" text-anchor="middle" fill="#8a8a8a">a</text></svg></div>
<i class="d4" style="left:848px"></i><i class="d4" style="left:852px"></i><i class="d4" style="left:856px"></i><i class="d4" style="left:860px"></i>

<!-- tabs -->
<div id="tab2"></div>
<div id="grid"></div>
<div id="tab1"></div>
<span class="tab" style="left:537px;top:249px">Состав</span>
<span class="tab" style="left:588px;top:249px">Нормативно-справочные документы</span>
<div id="gh"><i style="left:14px"></i><i style="left:455px"></i></div>
<span class="tab" style="left:545px;top:271px">Элемент</span>
<span class="tab" style="left:986px;top:271px">Тип</span>
<div class="gr first" style="top:288px"><i class="ind"><s></s></i><span class="c1" style="letter-spacing:-0.04px">A9 Производство</span><span class="c2" style="letter-spacing:-.35px">IDEF0</span></div>
<div class="gr" style="top:309px"><i class="ind"></i><span class="c1" style="letter-spacing:0.07px">2.2. Оплата труда производственных рабочих и начисления в Фонды</span><span class="c2">Бюджетная структура</span></div>
<div class="gr" style="top:330px"><i class="ind"></i><span class="c1" style="letter-spacing:0.027px">2.3.1. Амортизационные отчисления по производственному оборудованию и тран…</span><span class="c2">Бюджетная структура</span></div>
<div class="gr" style="top:351px"><i class="ind"></i><span class="c1" style="letter-spacing:0.083px">2.3.2. Содержание и эксплуатация производственного оборудования</span><span class="c2">Бюджетная структура</span></div>
<div class="gr" style="top:372px"><i class="ind"></i><span class="c1" style="letter-spacing:0.07px">2.3.3. Ремонт производственного оборудования и транспортных средств</span><span class="c2">Бюджетная структура</span></div>
<div class="gr" style="top:393px"><i class="ind"></i><span class="c1" style="letter-spacing:0.058px">2.3.5. Содержание аппарата управления цеха</span><span class="c2">Бюджетная структура</span></div>
<div class="gr" style="top:414px"><i class="ind"></i><span class="c1" style="letter-spacing:0.058px">2.3.6. Содержание прочего цехового персонала</span><span class="c2">Бюджетная структура</span></div>
<div class="gr" style="top:435px"><i class="ind"></i><span class="c1" style="letter-spacing:0.002px">2.3.7. Амортизационные отчисления на полное восстановление зданий и сооруже…</span><span class="c2">Бюджетная структура</span></div>
<div class="gr" style="top:456px"><i class="ind"></i><span class="c1" style="letter-spacing:0.058px">2.3.8. Содержание зданий, сооружений и инвентаря</span><span class="c2">Бюджетная структура</span></div>
<div class="gr" style="top:477px"><i class="ind"></i><span class="c1" style="letter-spacing:0.039px">2.3.10. Испытания, опыты и исследования, рационализация и изобретательство</span><span class="c2">Бюджетная структура</span></div>
<div class="gr" style="top:498px"><i class="ind"></i><span class="c1" style="letter-spacing:0.2px">2.3.11. Охрана труда</span><span class="c2">Бюджетная структура</span></div>
<div class="gr" style="top:519px"><i class="ind"></i><span class="c1" style="letter-spacing:0.104px">2.3.12. Потери от простоев</span><span class="c2">Бюджетная структура</span></div>
<div class="gr" style="top:540px"><i class="ind"></i><span class="c1" style="letter-spacing:0.028px">2.3.13. Потери от брака и порчи материальных ценностей, недостача материалов…</span><span class="c2">Бюджетная структура</span></div>
<div class="gr" style="top:561px"><i class="ind"></i><span class="c1" style="letter-spacing:0.042px">4.6. Расходы по совершенствованию технологии и организации производства (не…</span><span class="c2">Бюджетная структура</span></div>
<div class="gr" style="top:582px"><i class="ind"></i><span class="c1" style="letter-spacing:0.01px">4.7. Расходы по обслуживанию производственного процесса</span><span class="c2">Бюджетная структура</span></div>
</div>
</body></html>
